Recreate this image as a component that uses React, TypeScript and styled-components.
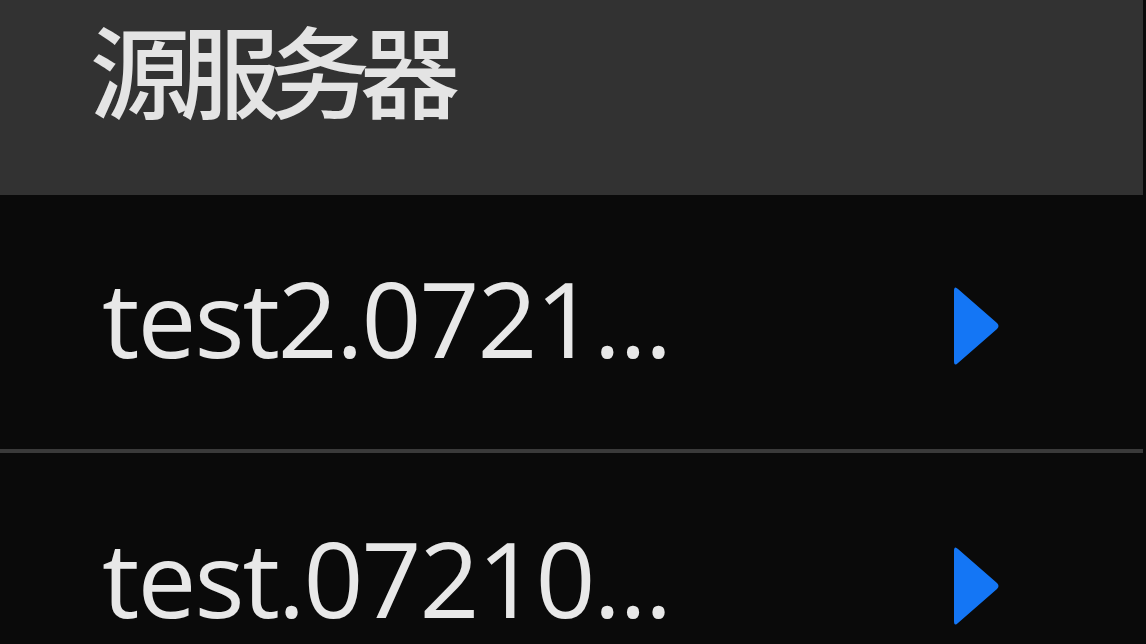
import styled, { createGlobalStyle } from "styled-components";

const GlobalStyle = createGlobalStyle`
  html, body {
    margin: 0;
    padding: 0;
    background: #0a0a0a;
  }
  body {
    font-family: "Open Sans", "Noto Sans CJK SC", sans-serif;
    overflow: hidden;
  }
`;

const Panel = styled.div`
  width: 1143px;
  height: 644px;
  overflow: hidden;
  background: #0a0a0a;
  display: flex;
  flex-direction: column;
`;

const Header = styled.div`
  height: 195px;
  flex-shrink: 0;
  box-sizing: border-box;
  background: #323232;
  padding: 8px 0 0 90px;
  > h2 {
    margin: 0;
    font-family: "Noto Sans CJK SC", sans-serif;
    font-weight: 500;
    font-size: 100px;
    line-height: 1.2;
    letter-spacing: -10px;
    color: #e4e4e4;
  }
`;

const List = styled.ul`
  list-style: none;
  margin: 0;
  padding: 0;
`;

const Row = styled.li`
  height: 258px;
  display: flex;
  align-items: center;
  justify-content: space-between;
  padding: 0 143px 10px 102px;
  box-sizing: border-box;
  border-bottom: 4px solid #3a3a3a;
  &:last-child {
    border-bottom: none;
  }
`;

const Name = styled.span`
  font-family: "Open Sans", sans-serif;
  font-size: 105px;
  line-height: 1;
  letter-spacing: -2px;
  color: #e8e8e8;
  white-space: nowrap;
`;

const Arrow = styled.svg`
  width: 48px;
  height: 82px;
  margin-top: 18px;
  flex-shrink: 0;
`;

const servers = ["test2.0721...", "test.07210..."];

export default function App() {
  return (
    <>
      <GlobalStyle />
      <Panel>
        <Header>
          <h2>源服务器</h2>
        </Header>
        <List>
          {servers.map((name) => (
            <Row key={name}>
              <Name>{name}</Name>
              <Arrow viewBox="0 0 48 82">
                <path
                  d="M2 6 Q2 0 6 4 L45 38 Q48 41 45 44 L6 78 Q2 82 2 76 Z"
                  fill="#1476f5"
                />
              </Arrow>
            </Row>
          ))}
        </List>
      </Panel>
    </>
  );
}
